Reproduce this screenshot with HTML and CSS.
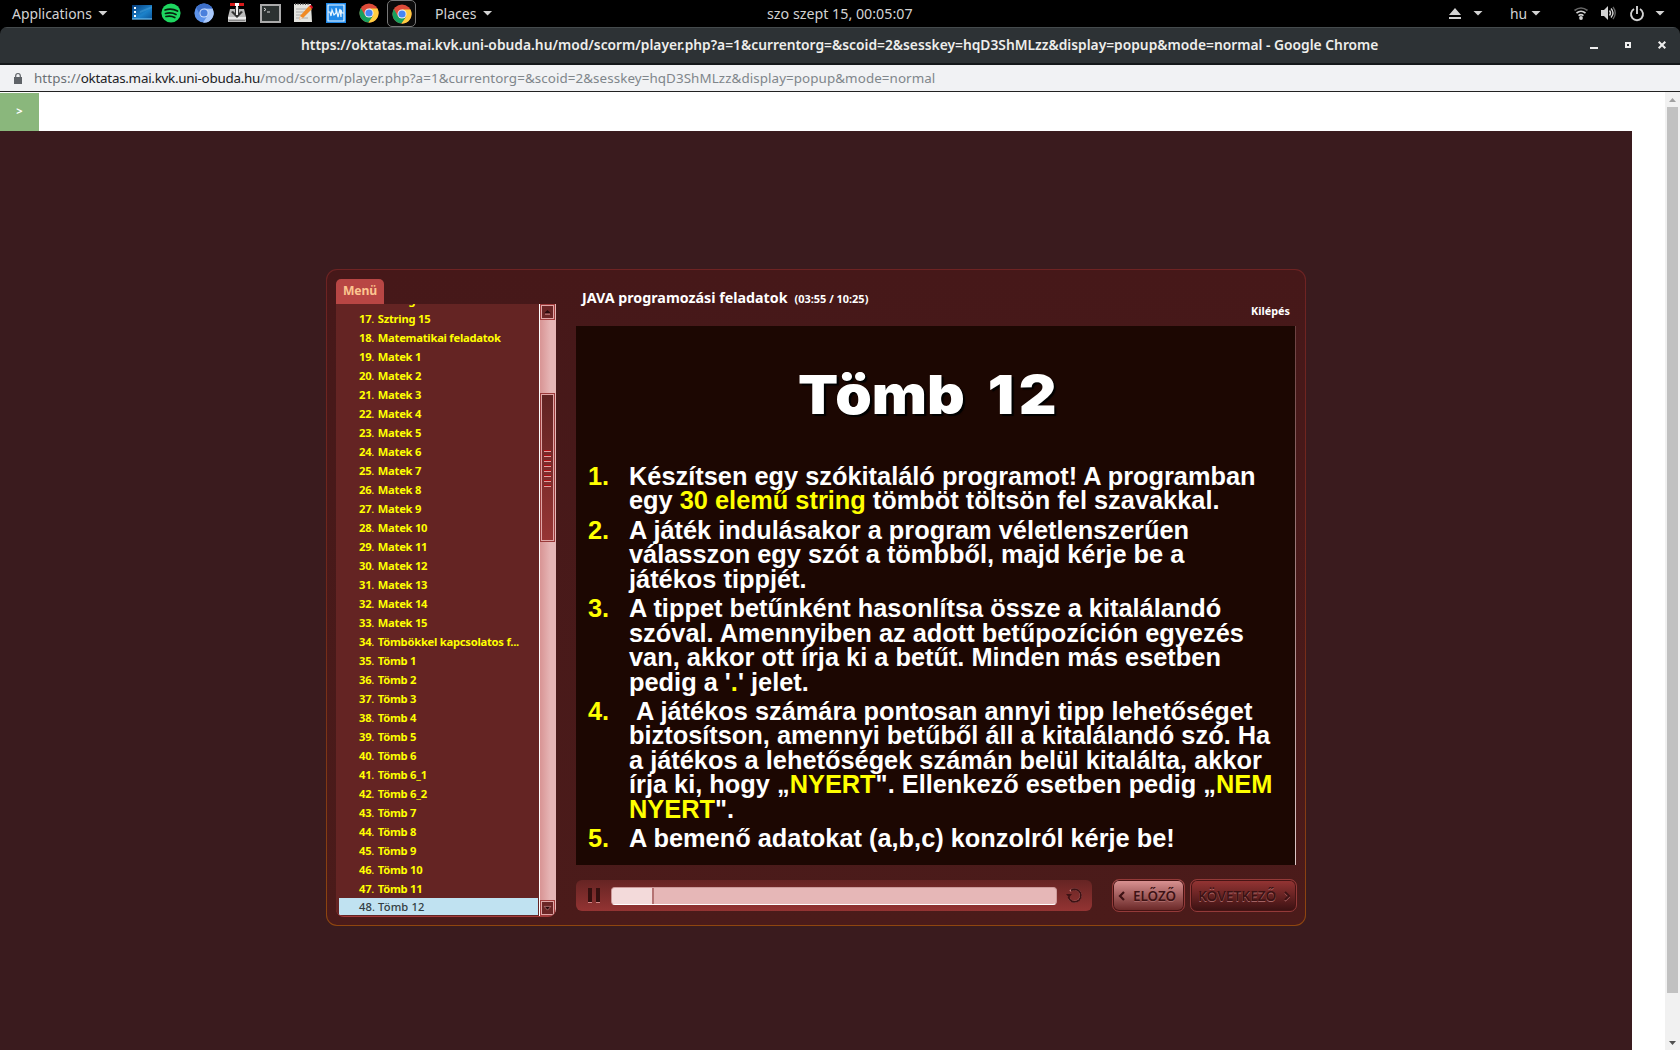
FILE: index.html
```html
<!DOCTYPE html>
<html lang="hu">
<head>
<meta charset="utf-8">
<title>JAVA programozási feladatok</title>
<link rel="stylesheet" href="styles.css">
</head>
<body>
<header class="topbar">
  <div class="apps">Applications<i class="caret"></i></div>
  <nav class="launchers">
    <svg class="desktop" viewBox="0 0 20 20"><defs><linearGradient id="desk" x2="1" y2="1"><stop stop-color="#063b78"/><stop offset=".6" stop-color="#1c82ca"/><stop offset="1" stop-color="#0a559b"/></linearGradient></defs><path fill="url(#desk)" d="M0 2h20v14H0z"/><path fill="#68b8ec" d="M0 15h20v2H0z" opacity=".65"/><path fill="#68b8ec" d="M8 8l12-5v2L8 10z" opacity=".3"/><path fill="#fff" d="M2 4h2v2H2zM2 8h2v2H2zM2 12h2v2H2z"/></svg>
    <svg viewBox="0 0 20 20"><circle cx="10" cy="10" r="9.6" fill="#1ed760"/><path d="M4 7q6.500-2 12.500 1M4.500 10.500q6-1.500 10.500 1M5 13.500q5-1.200 8.800 1" fill="none" stroke="#06200d" stroke-width="1.700" stroke-linecap="round"/></svg>
    <svg viewBox="0 0 20 20"><circle cx="10" cy="10" r="9.600" fill="#5d93ea"/><path fill="#a9c8fa" d="M10 5.500h8.500A9.600 9.600 0 0 1 9 19.600l5-7.500z"/><path fill="#3d6fc9" d="M2.200 4.500A9.600 9.600 0 0 1 18.500 5.600H10L6 12z"/><circle cx="10" cy="10" r="4.600" fill="#cfe0fb"/><circle cx="10" cy="10" r="3.600" fill="#4a7fdc"/></svg>
    <svg viewBox="0 0 20 20"><path fill="#bbb" d="M3 6h14l2 8v5H1v-5z"/><path fill="#e9e9e9" d="M1 14h18v2H1z"/><path fill="#888" d="M2 17h16v1H2z"/><path fill="#333" d="M4 9l6 6 6-6-2-1-2 2V4H8v6L6 8z"/><path fill="#eee" d="M9 3h2v9H9z"/><path fill="#d81b1b" d="M3 0h14v3H3z"/><path fill="#fff" d="M8 0h4v3H8z"/></svg>
    <svg class="term" viewBox="0 0 21 19"><path fill="#aaa" d="M0 0h21v19H0z"/><path fill="#2c3231" d="M2 2h17v15H2z"/><path d="M4 4l2 1.500L4 7M7 8h3" fill="none" stroke="#ddd"/></svg>
    <svg viewBox="0 0 20 20"><path fill="#e4e4df" d="M1 1h17l1 18H1z"/><path stroke="#aaa" d="M3 6h12M3 9h10M3 12h7M3 15h12"/><path stroke="#555" stroke-width="2" stroke-dasharray="1 1.500" d="M2 1h15"/><path fill="#f08a24" d="M16 3l3 3-9 9-4 2 1-4z"/><path fill="#d12" d="M16 3l2-1 2 2-1 2z"/><path fill="#edc" d="M7 13l3 2-4 2z"/></svg>
    <svg viewBox="0 0 20 20"><path fill="#2089e9" d="M0 0h20v20H0z"/><path d="M2 2h16v16H2zM2 9h2l1 4 1-6 2 5 2-2V5l2 9 2-8 1 8V7l1 3h2" fill="none" stroke="#e8f5ff" stroke-width="1.200"/></svg>
    <svg viewBox="0 0 20 20"><g id="chrome"><circle cx="10" cy="10" r="9.600" fill="#dd4b39"/><path fill="#ffcd41" d="M10 5.600h8.500A9.600 9.600 0 0 1 9.300 19.600l4.700-7.400z"/><path fill="#17a05d" d="M1.900 4.900A9.600 9.600 0 0 0 9.300 19.600l4.300-6.200L6 12.500z"/><circle cx="10" cy="10" r="4.500" fill="#f4f4f4"/><circle cx="10" cy="10" r="3.600" fill="#4586f3"/></g></svg>
    <span class="running"><svg viewBox="0 0 20 20"><use href="#chrome"/></svg></span>
  </nav>
  <div class="places">Places<i class="caret"></i></div>
  <time class="clock">szo szept 15, 00:05:07</time>
  <div class="tray">
    <svg class="eject" viewBox="0 0 12 11"><path fill="#d3d3d3" d="M6 0l6 7H0zM0 9h12v2H0z"/></svg><i class="caret c1"></i>
    <span class="lang">hu</span><i class="caret c2"></i>
    <svg class="wifi" viewBox="0 0 14 13"><g fill="none" stroke="#d3d3d3" stroke-width="1.600"><path stroke="#666" d="M.5 3.500q6.500-5 13 0"/><path d="M2.500 6q4.500-3.500 9 0M4.500 8.600q2.500-2 5 0"/></g><circle cx="7" cy="11" r="1.900" fill="#d3d3d3"/></svg>
    <svg class="vol" viewBox="0 0 15 14"><path fill="#d3d3d3" d="M0 4h3l4-4v14l-4-4H0z"/><path d="M8.500 4.500q2 2.500 0 5M10 2.500q4 4.500 0 9" fill="none" stroke="#d3d3d3" stroke-width="1.400"/><path d="M12 1q4.500 6 0 12" fill="none" stroke="#666" stroke-width="1.300"/></svg>
    <svg class="power" viewBox="0 0 14 15"><path d="M4 3a6 6 0 1 0 6 0M7 0v8" fill="none" stroke="#d3d3d3" stroke-width="1.900"/></svg><i class="caret c3"></i>
  </div>
</header>
<div class="window">
  <div class="titlebar">
    <h1>https://oktatas.mai.kvk.uni-obuda.hu/mod/scorm/player.php?a=1&amp;currentorg=&amp;scoid=2&amp;sesskey=hqD3ShMLzz&amp;display=popup&amp;mode=normal - Google Chrome</h1>
    <div class="controls"><i class="min"></i><i class="max"></i><svg viewBox="0 0 8 8"><path d="M.7.700l6.600 6.600M7.300.700L.7 7.300" stroke="#eee" stroke-width="2"/></svg></div>
  </div>
  <div class="urlbar">
    <svg viewBox="0 0 8 11"><path fill="#5f6368" d="M0 4h8v7H0z"/><path d="M1.700 4V2.800a2.300 2.300 0 0 1 4.600 0V4" fill="none" stroke="#5f6368" stroke-width="1.200"/></svg>
    <span class="url"><span>https://</span><b>oktatas.mai.kvk.uni-obuda.hu</b>/mod/scorm/player.php?a=1&amp;currentorg=&amp;scoid=2&amp;sesskey=hqD3ShMLzz&amp;display=popup&amp;mode=normal</span>
  </div>
</div>
<div class="viewport">
  <div class="page">
    <div class="toc-toggle">&gt;</div>
    <main class="stage">
      <section class="player">
        <aside class="sidebar">
          <div class="tab">Menü</div>
          <div class="menu">
            <ol class="items">
              <li>16<s>.</s> Sztring 14</li><li>17<s>.</s> Sztring 15</li><li>18<s>.</s> Matematikai feladatok</li><li>19<s>.</s> Matek 1</li><li>20<s>.</s> Matek 2</li><li>21<s>.</s> Matek 3</li><li>22<s>.</s> Matek 4</li><li>23<s>.</s> Matek 5</li><li>24<s>.</s> Matek 6</li><li>25<s>.</s> Matek 7</li><li>26<s>.</s> Matek 8</li><li>27<s>.</s> Matek 9</li><li>28<s>.</s> Matek 10</li><li>29<s>.</s> Matek 11</li><li>30<s>.</s> Matek 12</li><li>31<s>.</s> Matek 13</li><li>32<s>.</s> Matek 14</li><li>33<s>.</s> Matek 15</li><li>34<s>.</s> Tömbökkel kapcsolatos f...</li><li>35<s>.</s> Tömb 1</li><li>36<s>.</s> Tömb 2</li><li>37<s>.</s> Tömb 3</li><li>38<s>.</s> Tömb 4</li><li>39<s>.</s> Tömb 5</li><li>40<s>.</s> Tömb 6</li><li>41<s>.</s> Tömb 6_1</li><li>42<s>.</s> Tömb 6_2</li><li>43<s>.</s> Tömb 7</li><li>44<s>.</s> Tömb 8</li><li>45<s>.</s> Tömb 9</li><li>46<s>.</s> Tömb 10</li><li>47<s>.</s> Tömb 11</li><li class="current">48<s>.</s> Tömb 12</li>
            </ol>
            <div class="scroll">
              <div class="btn"><svg viewBox="0 0 8 6"><path fill="#2a0a0c" d="M4 0l4 4H0z"/><path stroke="#dd9a9a" d="M1 5h6"/></svg></div>
              <div class="thumb"><i></i><i></i><i></i><i></i><i></i><i></i><i></i><i></i></div>
              <div class="btn"><svg viewBox="0 0 8 6"><path fill="#2a0a0c" stroke="#dd9a9a" stroke-width=".7" d="M0 .5h8L4 5z"/></svg></div>
            </div>
          </div>
        </aside>
        <div class="main">
          <div class="heading"><h2>JAVA programozási feladatok</h2><span class="elapsed">(03:55 / 10:25)</span><span class="exit">Kilépés</span></div>
          <article class="slide">
            <h3><span>Tömb <b>12</b></span></h3>
            <ol>
              <li><b>1.</b><p>Készítsen egy szókitaláló programot! A programban<br>egy <em>30 elemű string</em> tömböt töltsön fel szavakkal.</p></li>
              <li><b>2.</b><p>A játék indulásakor a program véletlenszerűen<br>válasszon egy szót a tömbből, majd kérje be a<br>játékos tippjét.</p></li>
              <li><b>3.</b><p>A tippet betűnként hasonlítsa össze a kitalálandó<br>szóval. Amennyiben az adott betűpozíción egyezés<br>van, akkor ott írja ki a betűt. Minden más esetben<br>pedig a '<em>.</em>' jelet.</p></li>
              <li><b>4.</b><p>&nbsp;A játékos számára pontosan annyi tipp lehetőséget<br>biztosítson, amennyi betűből áll a kitalálandó szó. Ha<br>a játékos a lehetőségek számán belül kitalálta, akkor<br>írja ki, hogy „<em>NYERT</em>". Ellenkező esetben pedig „<em>NEM<br>NYERT</em>".</p></li>
              <li><b>5.</b><p>A bemenő adatokat (a,b,c) konzolról kérje be!</p></li>
            </ol>
          </article>
          <div class="controlsbar">
            <div class="transport">
              <div class="pause"><i></i><i></i></div>
              <div class="track"><div class="played"></div></div>
              <svg class="replay" viewBox="0 0 17 17"><g fill="none" stroke-width="1.800"><path stroke="#d08585" d="M3 11.500a6.300 6.300 0 1 0 1-7.500"/><path stroke="#3d1214" d="M2.500 10a6.300 6.300 0 1 0 2.500-6.600"/></g><path fill="#3d1214" d="M0 7h6L3 10.500z"/></svg>
            </div>
            <button class="nav prev"><svg viewBox="0 0 7 10"><path d="M6 1L2 5l4 4" fill="none" stroke="#3d1214" stroke-width="2.200"/></svg><span>ELŐZŐ</span></button>
            <button class="nav next"><span>KÖVETKEZŐ</span><svg viewBox="0 0 7 10"><path d="M1 2l4 4-4 4" fill="none" stroke="#c87c7c" stroke-width="1.500"/><path d="M1 1l4 4-4 4" fill="none" stroke="#3d1214" stroke-width="2"/></svg></button>
          </div>
        </div>
      </section>
    </main>
  </div>
  <div class="vscroll"><i class="up"></i><div class="vthumb"></div><i class="down"></i></div>
</div>
</body>
</html>
```
FILE: styles.css
```css
* { box-sizing: border-box; margin: 0; padding: 0; }
body { width: 1680px; height: 1050px; overflow: hidden; background: #000; font-family: "Noto Sans", sans-serif; display: flex; flex-direction: column; }
svg { display: block; flex: none; overflow: visible; }
i, em, s { font-style: normal; text-decoration: none; }
ol { list-style: none; }

.topbar { height: 27px; flex: none; display: flex; align-items: flex-start; color: #d3d3d3; font-size: 13.9px; line-height: 25px; white-space: nowrap; }
.topbar > * { height: 26px; display: flex; align-items: center; }
.caret { width: 10px; height: 5px; background: #d3d3d3; clip-path: polygon(0 0, 100% 0, 50% 100%); flex: none; }
.apps { padding-left: 12px; width: 132px; gap: 6px; }
.launchers { width: 303px; gap: 13px; }
.launchers svg { width: 20px; height: 20px; }
.launchers svg.desktop { margin-right: -4px; }
.launchers svg.term { width: 21px; height: 19px; margin-right: -1px; }
.running { width: 29px; height: 27px; margin: 0 0 -1px -5px; border: 1px solid #777; border-radius: 5px; display: flex; align-items: center; justify-content: center; background: #0b0b0b; }
.places { gap: 6px; width: 332px; font-size: 14.1px; }
.clock { width: 682px; font-size: 14.28px; }
.eject { width: 12px; height: 11px; }
.c1 { margin-left: 12px; }
.lang { margin-left: 27px; width: 16px; }
.c2 { margin-left: 5px; }
.wifi { width: 14px; height: 13px; margin-left: 33px; }
.vol { width: 15px; height: 14px; margin-left: 13px; }
.power { width: 14px; height: 15px; margin-left: 14px; }
.c3 { margin-left: 11px; }

.window { flex: none; }
.titlebar { height: 38px; background: linear-gradient(#454b4d 0 1px, #2d3235 1px 36px, #14181a 36px); border-radius: 7px 7px 0 0; display: flex; align-items: center; padding: 0 14px 2px 301px; justify-content: space-between; }
.titlebar h1 { font-size: 13.81px; font-weight: 600; color: #eeeeec; white-space: nowrap; line-height: 34px; }
.controls { display: flex; align-items: center; gap: 27px; }
.controls svg { width: 8px; height: 8px; }
.min { width: 8px; height: 2px; background: #eee; margin-top: 5px; }
.max { width: 6px; height: 6px; border: 2px solid #eee; }
.urlbar { height: 27px; background: #f1f2f4; border-bottom: 1px solid #222; display: flex; align-items: center; padding-left: 14px; gap: 12px; color: #80868b; }
.urlbar svg { width: 8px; height: 11px; }
.url { font-size: 13.4px; line-height: 26px; white-space: nowrap; }
.url span { color: #6b7074; }
.url b { font-weight: 400; color: #202124; letter-spacing: -.26px; }
.url { letter-spacing: .075px; }

.viewport { flex: 1; min-height: 0; display: flex; background: #fff; justify-content: space-between; }
.page { width: 1632px; display: flex; flex-direction: column; }
.toc-toggle { width: 39px; height: 38px; margin-top: 1px; background: #8ab77c; color: #fff; font-weight: 700; font-size: 11px; line-height: 36px; text-align: center; }
.stage { flex: 1; background: #3a1b1e; padding: 138px 0 0 326px; }
.vscroll { width: 15px; background: #f1f1f1; display: flex; flex-direction: column; align-items: center; padding: 6px 0 5px; }
.vthumb { width: 11px; height: 886px; background: #c1c1c1; margin: 5px 0 auto; }
.up { width: 7px; height: 4px; background: #a0a0a0; clip-path: polygon(50% 0, 100% 100%, 0 100%); }
.down { width: 7px; height: 4px; background: #505050; clip-path: polygon(0 0, 100% 0, 50% 100%); }

.player { width: 980px; height: 657px; border-radius: 11px; padding: 1px; background: linear-gradient(#461819, #4b1b1a) padding-box, linear-gradient(#6e2323, #72281b 50%, #8f460f) border-box; border: 1px solid transparent; display: flex; }
.sidebar { width: 248px; padding: 8px 0 0 8px; }
.tab { width: 48px; height: 25px; background: #b84644; border-radius: 5px 5px 0 0; color: #fdc590; font-weight: 700; font-size: 12.2px; line-height: 23px; text-align: center; letter-spacing: -.1px; }
.menu { width: 220px; height: 613px; background: #642423; border-radius: 0 0 8px 8px; border-bottom: 1px solid #a33b3b; display: flex; overflow: hidden; }
.items { width: 203px; padding-left: 3px; margin-top: -14px; color: #ff0; font-weight: 700; font-size: 11.2px; letter-spacing: -.24px; line-height: 19px; flex: none; }
.items li { height: 19px; padding-left: 20px; width: 199px; white-space: nowrap; }
.items s { font-weight: 400; margin-right: 1px; }
.items .current { background: #c0e2f1; color: #333d42; font-weight: 500; height: 17px; line-height: 18px; letter-spacing: .1px; }
.current s { margin-right: 0; }
.scroll { width: 17px; border-left: 1px solid #fff; background: linear-gradient(90deg, #d89494, #e6b6b6 65%); display: flex; flex-direction: column; }
.btn { width: 15px; height: 16px; background: #6b2626; border: 1px solid #a03c3c; outline: 1px solid #e0a6a6; outline-offset: -2px; display: flex; align-items: center; justify-content: center; flex: none; }
.btn:last-child { margin-top: auto; }
.btn svg { width: 7px; height: 5px; }
.thumb { flex: none; margin-top: 73px; width: 15px; height: 149px; border: 1px solid #9a3939; outline: 1px solid #e0a6a6; outline-offset: -2px; background: linear-gradient(#602322, #963534); padding: 56px 3px 0; display: flex; flex-direction: column; gap: 3px; align-items: stretch; }
.thumb i { height: 2px; background: linear-gradient(#b10d12 50%, #dfa0a0 50%); flex: none; }

.main { flex: 1; display: flex; flex-direction: column; }
.heading { height: 55px; display: flex; color: #fff; font-weight: 700; padding: 17px 14px 0 6px; white-space: nowrap; }
.heading h2 { font-size: 14.25px; line-height: 20px; }
.elapsed { font-size: 10.95px; line-height: 22px; margin-left: 7px; }
.exit { font-size: 10.85px; line-height: 22px; margin: 12px 0 0 auto; }
.slide { width: 720px; height: 539px; background: #1c0702; border-right: 1px solid; border-image: linear-gradient(#6b4040, #ddc8c8) 1; color: #fff; font-family: "Liberation Sans", Arial, sans-serif; font-weight: 700; padding-top: 35px; }
.slide h3 { font-family: Inter, sans-serif; font-weight: 900; font-size: 54px; line-height: 68px; height: 68px; padding-left: 222px; white-space: nowrap; text-shadow: 2px 2px 1px #000; }
.slide h3 span { display: inline-block; transform: scaleX(1.084); transform-origin: 0 50%; word-spacing: 10.5px; }
.slide h3 b { font-weight: 900; letter-spacing: 4px; }
.slide ol { padding: 35px 0 0 12px; display: flex; flex-direction: column; gap: 5px; font-size: 25.37px; line-height: 24.43px; }
.slide li { display: flex; }
.slide li b { width: 41px; color: #ff0; flex: none; }
.slide p { white-space: nowrap; }
.slide em { color: #ff0; }

.controlsbar { display: flex; margin-top: 14px; align-items: flex-start; }
.transport { width: 516px; height: 31px; margin-top: 1px; border-radius: 6px; background: linear-gradient(#662423, #933433); display: flex; align-items: center; padding-left: 12px; }
.pause { display: flex; gap: 4px; width: 23px; }
.pause i { width: 4px; height: 15px; background: #35100f; border-bottom: 1px solid #d08585; }
.track { width: 446px; height: 18px; border-radius: 4px; background: #e6b7b7; border: 1px solid #c99; border-bottom-color: #fff; overflow: hidden; display: flex; }
.played { width: 42px; background: #f3dada; border-right: 2px solid #b57373; }
.replay { width: 17px; height: 17px; margin-left: 9px; }
.nav { height: 33px; border: 1px solid #943a39; border-radius: 7px; box-shadow: inset 0 0 0 1px #461414; font: 600 13.4px "Noto Sans", sans-serif; color: #3d1214; display: flex; align-items: center; }
.nav svg { width: 7px; height: 10px; }
.prev { width: 73px; margin-left: 20px; background: linear-gradient(#dc9494, #682625); padding-left: 5px; gap: 8px; }
.prev span { text-shadow: 0 1px 0 #d99a9a66; }
.next { width: 107px; margin-left: 5px; background: linear-gradient(#963534, #3a1112); padding-left: 7px; gap: 8px; font-size: 13.7px; }
.next span { text-shadow: 0 1px 0 #c88a; }
```
